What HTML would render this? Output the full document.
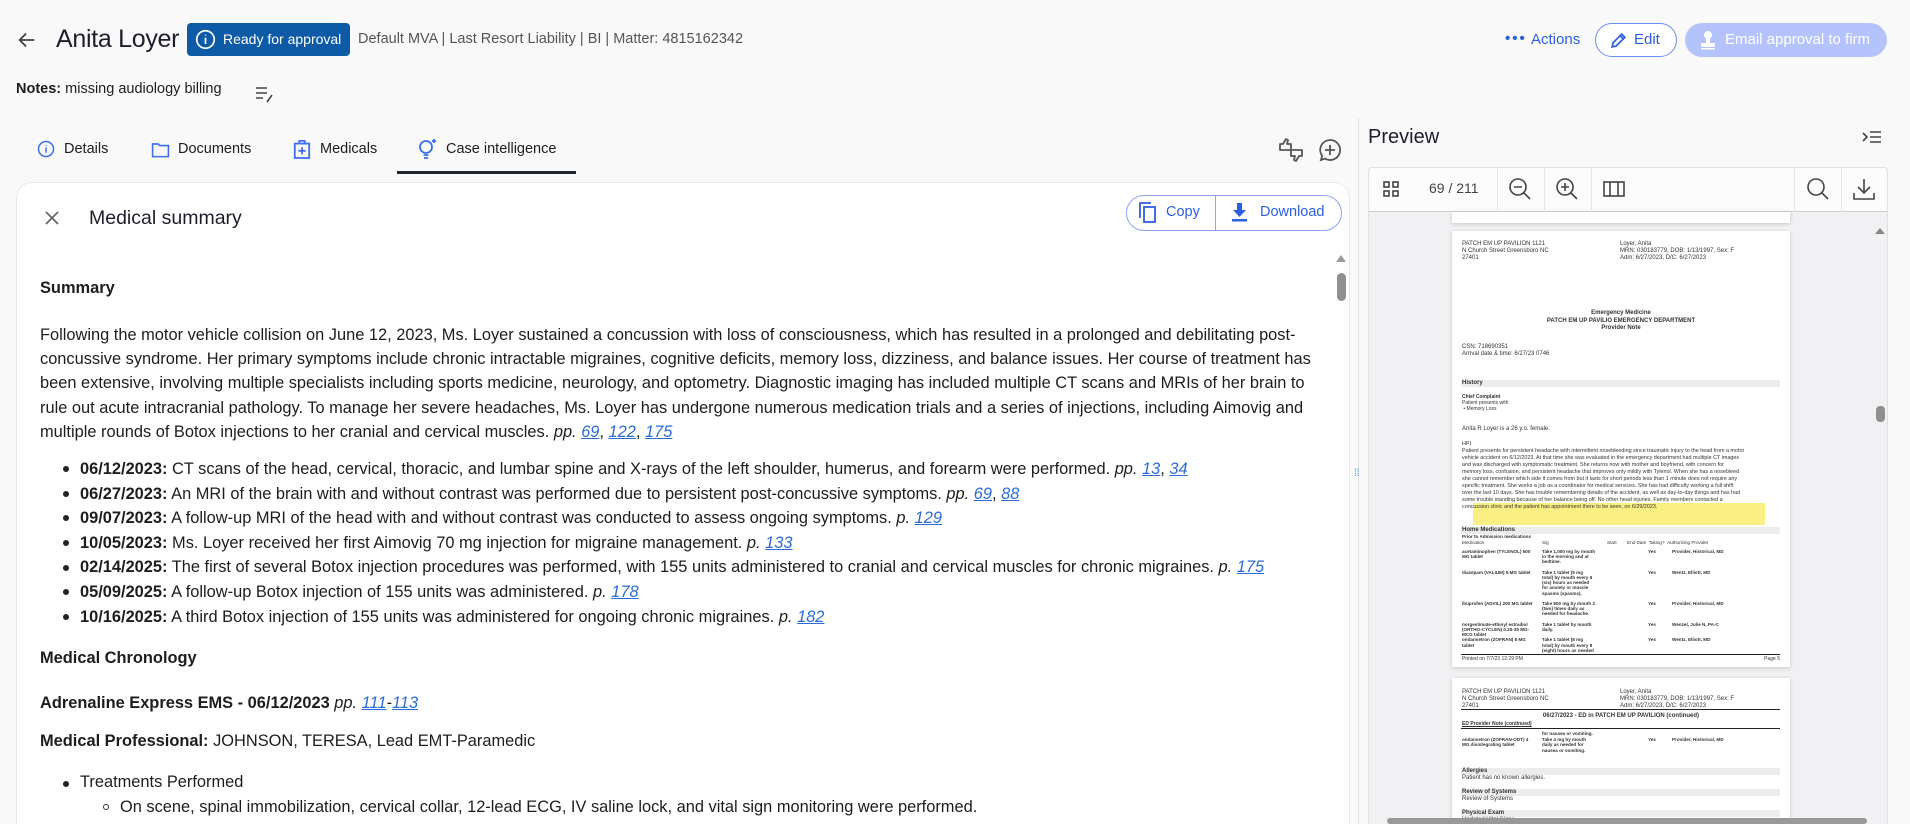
<!DOCTYPE html>
<html><head><meta charset="utf-8"><style>
*{box-sizing:border-box;margin:0;padding:0}
html{width:1910px;height:824px;overflow:hidden}
body{width:1910px;height:824px;overflow:hidden;background:#f9f9f9;font-family:"Liberation Sans",sans-serif;color:#1d1d1f;position:relative}
.a{position:absolute;white-space:nowrap}
a{color:#2b6bd6;text-decoration:underline;font-style:italic}
.it{font-style:italic}
.bt{font-size:16.4px;line-height:24.2px}
.bl{font-size:16.4px;line-height:24.6px}
.dot{position:absolute;width:6px;height:6px;border-radius:50%;background:#222}
.pg{position:absolute;background:#fff;box-shadow:0 1px 4px rgba(0,0,0,.18);overflow:hidden}
.t{position:absolute;white-space:nowrap;font-size:6px;line-height:7px;color:#333;font-family:"Liberation Sans",sans-serif}
.bar{position:absolute;height:7px;background:#ececec}
.sep{position:absolute;top:0;width:1px;height:44px;background:#e6e6ee}
</style></head><body>
<svg class="a" style="left:16px;top:29px" width="22" height="22" viewBox="0 0 24 24" fill="none" stroke="#444" stroke-width="2"><path d="M20 12H5M11 5l-7 7 7 7"/></svg>
<div class="a" style="left:56px;top:25px;font-size:25px;color:#1d1d2b;letter-spacing:-0.3px">Anita Loyer</div>
<div class="a" style="left:187px;top:23px;width:163px;height:33px;background:#0d5aa7;border-radius:4px;color:#fff;font-size:14px;line-height:33px;padding-left:36px">Ready for approval</div>
<svg class="a" style="left:195px;top:29px" width="21" height="21" viewBox="0 0 24 24" fill="none" stroke="#fff" stroke-width="2"><circle cx="12" cy="12" r="10"/><path d="M12 10v7M12 6.5v1"/></svg>
<div class="a" style="left:358px;top:31px;font-size:14.5px;color:#555">Default MVA | Last Resort Liability | BI | Matter: 4815162342</div>
<div class="a" style="left:1505px;top:30px;font-size:15px;color:#2c5fe0;letter-spacing:2px;font-weight:bold">•••</div>
<div class="a" style="left:1531px;top:31px;font-size:15px;color:#2c5fe0">Actions</div>
<div class="a" style="left:1595px;top:23px;width:82px;height:34px;border:1px solid #6b8ff0;border-radius:17px;background:#fff"></div>
<svg class="a" style="left:1609px;top:31px" width="19" height="19" viewBox="0 0 24 24" fill="none" stroke="#2c5fe0" stroke-width="2.2"><path d="M4 20l1-5L16 4l4 4L9 19zM14 6l4 4"/></svg>
<div class="a" style="left:1634px;top:31px;font-size:15px;color:#2c5fe0">Edit</div>
<div class="a" style="left:1685px;top:23px;width:202px;height:34px;border-radius:17px;background:#b4c3fb;color:#fff;font-size:15px;line-height:34px;padding-left:40px">Email approval to firm</div>
<svg class="a" style="left:1699px;top:30px" width="18" height="20" viewBox="0 0 18 20" fill="#fff"><circle cx="9" cy="5" r="4"/><rect x="7" y="8" width="4" height="5"/><rect x="2" y="13" width="14" height="4" rx="1"/><rect x="2" y="18" width="14" height="1.5"/></svg>
<div class="a" style="left:16px;top:81px;font-size:14.5px"><b>Notes:</b> missing audiology billing</div>
<svg class="a" style="left:254px;top:84px" width="22" height="20" viewBox="0 0 22 20" fill="none" stroke="#444" stroke-width="1.6"><path d="M2 4h11M2 9h11M2 14h7M13 18l5-7"/></svg>
<svg class="a" style="left:37px;top:140px" width="18" height="18" viewBox="0 0 24 24" fill="none" stroke="#3d6ef0" stroke-width="2"><circle cx="12" cy="12" r="10"/><path d="M12 10v7M12 6.5v1"/></svg>
<div class="a" style="left:64px;top:141px;font-size:14.5px">Details</div>
<svg class="a" style="left:151px;top:141px" width="19" height="17" viewBox="0 0 24 20" fill="none" stroke="#3d6ef0" stroke-width="2"><path d="M2 3h7l2 2h11v14H2z"/></svg>
<div class="a" style="left:178px;top:141px;font-size:14.5px">Documents</div>
<svg class="a" style="left:293px;top:139px" width="18" height="20" viewBox="0 0 20 22" fill="none" stroke="#3d6ef0" stroke-width="2"><rect x="2" y="5" width="16" height="16"/><path d="M7 5V2h6v3M10 9v8M6 13h8"/></svg>
<div class="a" style="left:320px;top:141px;font-size:14.5px">Medicals</div>
<svg class="a" style="left:418px;top:138px" width="20" height="22" viewBox="0 0 20 22" fill="none" stroke="#3d6ef0" stroke-width="1.8"><circle cx="8" cy="9" r="6"/><path d="M5.5 17h5M6 20h4M16 1v4M14 3h4"/></svg>
<div class="a" style="left:446px;top:141px;font-size:14.5px">Case intelligence</div>
<div class="a" style="left:397px;top:171px;width:179px;height:3px;background:#1f2333"></div>
<svg class="a" style="left:1278px;top:137px" width="26" height="26" viewBox="0 0 26 26" fill="none" stroke="#555" stroke-width="1.8" stroke-linejoin="round"><path d="M2 7h3l3-5 2 1-1 4h4v6H2zM24 19h-3l-3 5-2-1 1-4h-4v-6h11z"/></svg>
<svg class="a" style="left:1318px;top:138px" width="24" height="24" viewBox="0 0 24 24" fill="none" stroke="#555" stroke-width="1.8"><path d="M12 2a10 10 0 1 1-5 18.6L3 22l1.2-4A10 10 0 0 1 12 2zM12 7v10M7 12h10"/></svg>
<div class="a" style="left:16px;top:182px;width:1334px;height:642px;background:#fff;border:1px solid #e8e8e8;border-bottom:none;border-radius:16px 16px 0 0"></div>
<svg class="a" style="left:44px;top:210px" width="16" height="16" viewBox="0 0 16 16" stroke="#666" stroke-width="1.8"><path d="M2 2l12 12M14 2L2 14"/></svg>
<div class="a" style="left:89px;top:207px;font-size:19.5px;color:#1d1d2b">Medical summary</div>
<div class="a" style="left:1126px;top:195px;width:216px;height:36px;border:1px solid #8aa6f2;border-radius:18px"></div>
<div class="a" style="left:1215px;top:195px;width:1px;height:36px;background:#8aa6f2"></div>
<svg class="a" style="left:1139px;top:202px" width="18" height="22" viewBox="0 0 18 22" fill="none" stroke="#2c5fe0" stroke-width="1.8"><path d="M1 16V1h11"/><rect x="5" y="5" width="11" height="15"/></svg>
<div class="a" style="left:1166px;top:204px;font-size:14.5px;color:#2c5fe0">Copy</div>
<svg class="a" style="left:1231px;top:203px" width="17" height="19" viewBox="0 0 17 19" fill="#2c5fe0"><path d="M6 0h5v7h4l-6.5 7L2 7h4z"/><rect x="1" y="16" width="15" height="2.5"/></svg>
<div class="a" style="left:1260px;top:204px;font-size:14.5px;color:#2c5fe0">Download</div>
<div class="a" style="left:1336px;top:255px;border-left:5px solid transparent;border-right:5px solid transparent;border-bottom:7px solid #999"></div>
<div class="a" style="left:1337px;top:273px;width:9px;height:28px;border-radius:5px;background:#8f8f8f"></div>

<div class="a" style="left:40px;top:279px;font-size:16.4px;font-weight:bold">Summary</div>
<div class="a bt" style="left:40px;top:323px">Following the motor vehicle collision on June 12, 2023, Ms. Loyer sustained a concussion with loss of consciousness, which has resulted in a prolonged and debilitating post-<br>concussive syndrome. Her primary symptoms include chronic intractable migraines, cognitive deficits, memory loss, dizziness, and balance issues. Her course of treatment has<br>been extensive, involving multiple specialists including sports medicine, neurology, and optometry. Diagnostic imaging has included multiple CT scans and MRIs of her brain to<br>rule out acute intracranial pathology. To manage her severe headaches, Ms. Loyer has undergone numerous medication trials and a series of injections, including Aimovig and<br>multiple rounds of Botox injections to her cranial and cervical muscles. <span class="it">pp.</span> <a>69</a>, <a>122</a>, <a>175</a></div>
<div class="dot" style="left:63px;top:466px"></div><div class="dot" style="left:63px;top:491px"></div><div class="dot" style="left:63px;top:515px"></div><div class="dot" style="left:63px;top:540px"></div><div class="dot" style="left:63px;top:565px"></div><div class="dot" style="left:63px;top:589px"></div><div class="dot" style="left:63px;top:614px"></div>
<div class="a bl" style="left:80px;top:457px"><b>06/12/2023:</b> CT scans of the head, cervical, thoracic, and lumbar spine and X-rays of the left shoulder, humerus, and forearm were performed. <span class="it">pp.</span> <a>13</a>, <a>34</a><br><b>06/27/2023:</b> An MRI of the brain with and without contrast was performed due to persistent post-concussive symptoms. <span class="it">pp.</span> <a>69</a>, <a>88</a><br><b>09/07/2023:</b> A follow-up MRI of the head with and without contrast was conducted to assess ongoing symptoms. <span class="it">p.</span> <a>129</a><br><b>10/05/2023:</b> Ms. Loyer received her first Aimovig 70 mg injection for migraine management. <span class="it">p.</span> <a>133</a><br><b>02/14/2025:</b> The first of several Botox injection procedures was performed, with 155 units administered to cranial and cervical muscles for chronic migraines. <span class="it">p.</span> <a>175</a><br><b>05/09/2025:</b> A follow-up Botox injection of 155 units was administered. <span class="it">p.</span> <a>178</a><br><b>10/16/2025:</b> A third Botox injection of 155 units was administered for ongoing chronic migraines. <span class="it">p.</span> <a>182</a></div>
<div class="a" style="left:40px;top:649px;font-size:16.4px;font-weight:bold">Medical Chronology</div>
<div class="a" style="left:40px;top:694px;font-size:16.4px"><b>Adrenaline Express EMS - 06/12/2023</b> <span class="it">pp.</span> <a>111</a>-<a>113</a></div>
<div class="a" style="left:40px;top:732px;font-size:16.4px"><b>Medical Professional:</b> JOHNSON, TERESA, Lead EMT-Paramedic</div>
<div class="dot" style="left:63px;top:781px"></div>
<div class="a" style="left:80px;top:773px;font-size:16.4px">Treatments Performed</div>
<div class="a" style="left:103px;top:804px;width:6px;height:6px;border:1px solid #333;border-radius:50%"></div>
<div class="a" style="left:120px;top:798px;font-size:16.4px">On scene, spinal immobilization, cervical collar, 12-lead ECG, IV saline lock, and vital sign monitoring were performed.</div>
<div class="a" style="left:1358px;top:118px;width:1px;height:706px;background:#e2e2e2"></div>
<div class="a" style="left:1354px;top:472px;color:#3d8cf0;font-size:10px;line-height:4px">⁞⁞</div>
<div class="a" style="left:1368px;top:126px;font-size:20px;color:#1d1d2b">Preview</div>
<svg class="a" style="left:1862px;top:130px" width="20" height="16" viewBox="0 0 20 16" fill="none" stroke="#444" stroke-width="1.6"><path d="M1 3l4 4-4 4M8 2h11M8 7h11M8 12h11"/></svg>
<div class="a" style="left:1368px;top:167px;width:520px;height:657px;background:#f1f1f3;border:1px solid #e0e0e0;border-bottom:none;border-radius:4px 4px 0 0"></div>
<div class="a" style="left:1368px;top:167px;width:520px;height:45px;background:#fcfcfd;border:1px solid #e0e0e0;border-bottom:1px solid #cfcfcf;border-radius:4px 4px 0 0">
<div class="sep" style="left:128px"></div><div class="sep" style="left:175px"></div><div class="sep" style="left:222px"></div><div class="sep" style="left:425px"></div><div class="sep" style="left:472px"></div>
</div>
<svg class="a" style="left:1383px;top:181px" width="16" height="16" viewBox="0 0 16 16" fill="none" stroke="#444" stroke-width="1.6"><rect x="1" y="1" width="5" height="5"/><rect x="10" y="1" width="5" height="5"/><rect x="1" y="10" width="5" height="5"/><rect x="10" y="10" width="5" height="5"/></svg>
<div class="a" style="left:1429px;top:180px;font-size:14px;color:#444">69 / 211</div>
<svg class="a" style="left:1508px;top:177px" width="24" height="24" viewBox="0 0 24 24" fill="none" stroke="#444" stroke-width="1.6"><circle cx="10" cy="10" r="8"/><path d="M16 16l6 6M6 10h8"/></svg>
<svg class="a" style="left:1555px;top:177px" width="24" height="24" viewBox="0 0 24 24" fill="none" stroke="#444" stroke-width="1.6"><circle cx="10" cy="10" r="8"/><path d="M16 16l6 6M6 10h8M10 6v8"/></svg>
<svg class="a" style="left:1603px;top:181px" width="22" height="16" viewBox="0 0 22 16" fill="none" stroke="#444" stroke-width="1.6"><rect x="1" y="1" width="20" height="14"/><path d="M7 1v14M15 1v14"/></svg>
<svg class="a" style="left:1806px;top:177px" width="24" height="24" viewBox="0 0 24 24" fill="none" stroke="#444" stroke-width="1.6"><circle cx="10" cy="10" r="8"/><path d="M16 16l6 6"/></svg>
<svg class="a" style="left:1853px;top:177px" width="22" height="24" viewBox="0 0 22 24" fill="none" stroke="#444" stroke-width="1.6"><path d="M11 2v14M5 10l6 6 6-6M1 16v6h20v-6"/></svg>
<div class="a" style="left:1875px;top:228px;border-left:5px solid transparent;border-right:5px solid transparent;border-bottom:6px solid #888"></div>
<div class="a" style="left:1876px;top:406px;width:9px;height:16px;border-radius:4px;background:#8f8f8f"></div>
<div class="pg" style="left:1452px;top:212px;width:338px;height:11px"></div>
<div class="pg" style="left:1452px;top:231px;width:338px;height:436px">
<div class="t" style="left:10px;top:10px">PATCH EM UP PAVILION 1121<br>N Church Street Greensboro NC<br>27401</div>
<div class="t" style="left:168px;top:10px">Loyer, Anita<br>MRN: 030183779, DOB: 1/13/1997, Sex: F<br>Adm: 6/27/2023, D/C: 6/27/2023</div>
<div class="t" style="left:0;width:338px;text-align:center;top:79px;font-weight:bold;line-height:7.5px">Emergency Medicine<br>PATCH EM UP PAVILIO EMERGENCY DEPARTMENT<br>Provider Note</div>
<div class="t" style="left:10px;top:113px">CSN: 718690351<br>Arrival date &amp; time: 6/27/23 0746</div>
<div class="bar" style="left:9px;top:149px;width:319px"></div><div class="t" style="left:10px;top:149px;font-weight:bold">History</div>
<div class="t" style="left:10px;top:163px;font-size:5px;line-height:6px"><b>Chief Complaint</b><br>Patient presents with<br>&nbsp;• Memory Loss</div>
<div class="t" style="left:10px;top:195px">Anita R Loyer is a 26 y.o. female.</div>
<div class="a" style="left:21px;top:272px;width:292px;height:22px;background:#fbee82"></div>
<div class="t" style="left:10px;top:210px;font-size:5.4px;line-height:7px">HPI<br>Patient presents for persistent headache with intermittent nosebleeding since traumatic injury to the head from a motor<br>vehicle accident on 6/12/2023. At that time she was evaluated in the emergency department had multiple CT images<br>and was discharged with symptomatic treatment. She returns now with mother and boyfriend, with concern for<br>memory loss, confusion, and persistent headache that improves only mildly with Tylenol. When she has a nosebleed<br>she cannot remember which side it comes from but it lasts for short periods less than 1 minute does not require any<br>specific treatment. She works a job as a coordinator for medical services. She has had difficulty working a full shift<br>over the last 10 days. She has trouble remembering details of the accident, as well as day-to-day things and has had<br>some trouble standing because of her balance being off. No other head injuries. Family members contacted a<br>concussion clinic and the patient has appointment there to be seen, on 6/29/2023.</div>
<div class="bar" style="left:9px;top:296px;width:319px"></div><div class="t" style="left:10px;top:296px;font-weight:bold">Home Medications</div>
<div class="t" style="left:10px;top:303px;font-size:4.6px;line-height:5.6px"><b>Prior to Admission medications</b><br>Medication</div>
<div class="t" style="left:90px;top:308px;font-size:4.6px">Sig</div><div class="t" style="left:155px;top:308px;font-size:4.6px">Start</div><div class="t" style="left:175px;top:308px;font-size:4.6px">End Date &nbsp;Taking? &nbsp;Authorizing Provider</div>
<div class="t" style="left:10px;top:318px;font-size:4.6px;line-height:5.2px;font-weight:bold">acetaminophen (TYLENOL) 500<br>MG tablet<br><br><br>diazepam (VALIUM) 5 MG tablet<br><br><br><br><br><br>ibuprofen (ADVIL) 200 MG tablet<br><br><br><br>norgestimate-ethinyl estradiol<br>(ORTHO-CYCLEN) 0.25-35 MG-<br>MCG tablet<br>ondansetron (ZOFRAN) 8 MG<br>tablet</div>
<div class="t" style="left:90px;top:318px;font-size:4.6px;line-height:5.2px;font-weight:bold">Take 1,000 mg by mouth<br>in the morning and at<br>bedtime.<br><br>Take 1 tablet (5 mg<br>total) by mouth every 6<br>(six) hours as needed<br>for anxiety or muscle<br>spasms (spasms).<br><br>Take 800 mg by mouth 2<br>(two) times daily as<br>needed for headache.<br><br>Take 1 tablet by mouth<br>daily.<br><br>Take 1 tablet (8 mg<br>total) by mouth every 8<br>(eight) hours as needed</div>
<div class="t" style="left:196px;top:318px;font-size:4.6px;line-height:5.2px;font-weight:bold">Yes<br><br><br><br>Yes<br><br><br><br><br><br>Yes<br><br><br><br>Yes<br><br><br>Yes</div>
<div class="t" style="left:220px;top:318px;font-size:4.6px;line-height:5.2px;font-weight:bold">Provider, Historical, MD<br><br><br><br>Wentz, Elliott, MD<br><br><br><br><br><br>Provider, Historical, MD<br><br><br><br>Wenzel, Julie N, PA-C<br><br><br>Wentz, Elliott, MD</div>
<div class="a" style="left:9px;top:423px;width:319px;height:1px;background:#222"></div>
<div class="t" style="left:10px;top:425px;font-size:5px">Printed on 7/7/23 12:29 PM</div><div class="t" style="right:10px;top:425px;font-size:5px">Page 5</div>
</div>
<div class="pg" style="left:1452px;top:678px;width:338px;height:146px">
<div class="t" style="left:10px;top:11px">PATCH EM UP PAVILION 1121<br>N Church Street Greensboro NC<br>27401</div>
<div class="t" style="left:168px;top:11px">Loyer, Anita<br>MRN: 030183779, DOB: 1/13/1997, Sex: F<br>Adm: 6/27/2023, D/C: 6/27/2023</div>
<div class="a" style="left:9px;top:31px;width:319px;height:1px;background:#222"></div>
<div class="t" style="left:0;width:338px;text-align:center;top:35px;font-weight:bold">06/27/2023 - ED in PATCH EM UP PAVILION (continued)</div>
<div class="t" style="left:10px;top:43px;font-size:5px;font-weight:bold;text-decoration:underline">ED Provider Note (continued)</div>
<div class="a" style="left:9px;top:50px;width:319px;height:1px;background:#222"></div>
<div class="t" style="left:10px;top:53px;font-size:4.6px;line-height:5.6px;font-weight:bold">&nbsp;<br>ondansetron (ZOFRAN-ODT) 4<br>MG disintegrating tablet</div>
<div class="t" style="left:90px;top:53px;font-size:4.6px;line-height:5.6px;font-weight:bold">for nausea or vomiting.<br>Take 4 mg by mouth<br>daily as needed for<br>nausea or vomiting.</div>
<div class="t" style="left:196px;top:58px;font-size:4.6px;font-weight:bold">Yes</div><div class="t" style="left:220px;top:58px;font-size:4.6px;font-weight:bold">Provider, Historical, MD</div>
<div class="bar" style="left:9px;top:90px;width:319px"></div><div class="t" style="left:10px;top:90px;font-weight:bold">Allergies</div>
<div class="t" style="left:10px;top:97px">Patient has no known allergies.</div>
<div class="bar" style="left:9px;top:111px;width:319px"></div><div class="t" style="left:10px;top:111px;font-weight:bold">Review of Systems</div>
<div class="t" style="left:10px;top:118px">Review of Systems</div>
<div class="bar" style="left:9px;top:132px;width:319px"></div><div class="t" style="left:10px;top:132px;font-weight:bold">Physical Exam</div>
<div class="t" style="left:10px;top:139px">Updated Vital Signs</div>
</div>
<div class="a" style="left:1387px;top:818px;width:480px;height:6px;border-radius:3px;background:#999"></div>
</body></html>
